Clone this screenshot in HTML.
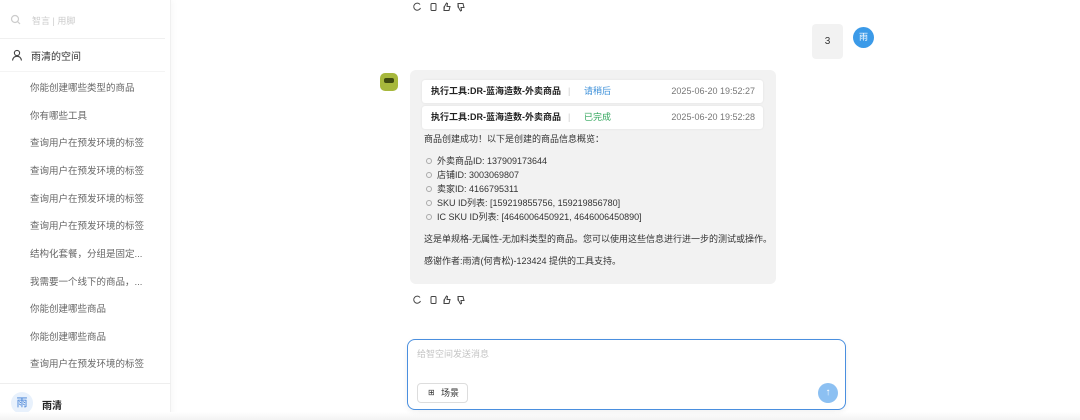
<!DOCTYPE html>
<html><head><meta charset="utf-8"><style>
*{margin:0;padding:0;box-sizing:border-box}
body{width:1080px;height:420px;overflow:hidden;background:#fff;font-family:"Liberation Sans","Noto Sans CJK SC",sans-serif;position:relative;color:#333}
.sb{position:absolute;left:0;top:0;width:171px;height:420px;background:#fff;border-right:1px solid #f0f0f0;box-shadow:2px 0 6px rgba(0,0,0,.03)}
.abs{position:absolute}
.item{position:absolute;left:30px;font-size:9.5px;color:#666;white-space:nowrap}
.card{position:absolute;left:422px;width:341px;height:23px;line-height:23px;background:#fff;border-radius:3px;font-size:9px;box-shadow:0 0 2px rgba(0,0,0,.08)}
.card span,.card b{position:absolute;top:0;line-height:23px}
.card b{left:9px;color:#222}
.card .s{left:146px;color:#ccc}
.card .st{left:162px}
.card .t{right:8px;color:#777}
.txt{position:absolute;left:424px;font-size:9px;color:#333;white-space:nowrap}
.li{position:absolute;left:426px;font-size:9px;color:#333;white-space:nowrap}
.li:before{content:"";position:absolute;left:0;top:4px;width:4px;height:4px;border:1px solid #aaa;border-radius:50%}
.li span{margin-left:11px}
svg{position:absolute}
</style></head><body>
<div class="sb">
<svg style="left:10px;top:14px" width="12" height="12" viewBox="0 0 12 12"><circle cx="5" cy="5" r="3.5" fill="none" stroke="#ccc" stroke-width="1.2"/><path d="M7.5 7.5L10 10" stroke="#ccc" stroke-width="1.2"/></svg>
<div class="abs" style="left:32px;top:14px;font-size:9px;color:#ccc">智言 | 用脚</div>
<div class="abs" style="left:0;top:38px;width:165px;height:1px;background:#f0f0f0"></div>
<svg style="left:11px;top:49px" width="12" height="12" viewBox="0 0 12 12"><circle cx="6" cy="4" r="2.6" fill="none" stroke="#444" stroke-width="1.1"/><path d="M1.5 11.5C2 8.5 4 7.3 6 7.3S10 8.5 10.5 11.5" fill="none" stroke="#444" stroke-width="1.1"/></svg>
<div class="abs" style="left:31px;top:48px;font-size:10px;color:#333">雨清的空间</div>
<div class="abs" style="left:0;top:71px;width:165px;height:1px;background:#f4f4f4"></div>
<div class="item" style="top:80px">你能创建哪些类型的商品</div>
<div class="item" style="top:108px">你有哪些工具</div>
<div class="item" style="top:135px">查询用户在预发环境的标签</div>
<div class="item" style="top:163px">查询用户在预发环境的标签</div>
<div class="item" style="top:191px">查询用户在预发环境的标签</div>
<div class="item" style="top:218px">查询用户在预发环境的标签</div>
<div class="item" style="top:246px">结构化套餐，分组是固定...</div>
<div class="item" style="top:274px">我需要一个线下的商品，...</div>
<div class="item" style="top:301px">你能创建哪些商品</div>
<div class="item" style="top:329px">你能创建哪些商品</div>
<div class="item" style="top:356px">查询用户在预发环境的标签</div>
<div class="abs" style="left:0;top:383px;width:171px;height:1px;background:#eee"></div>
<div class="abs" style="left:11px;top:392px;width:22px;height:22px;border-radius:50%;background:#e8f1fc;color:#3a7bd5;font-size:11px;text-align:center;line-height:22px">雨</div>
<div class="abs" style="left:42px;top:397px;font-size:10px;color:#222;font-weight:bold">雨清</div>
</div>

<svg style="left:412px;top:1px" width="62" height="12" viewBox="0 0 62 12"><g fill="none" stroke="#444" stroke-width="1"><path d="M8 3.5A3.5 3.5 0 1 0 8.5 7"/><rect x="19" y="2.5" width="5" height="7" rx="1"/><path d="M32 9.5h5l1-4h-3l.5-3-1-.5-2 3.5zM32 5.5v4"/><path d="M46 2.5h5l1 4h-3l.5 3-1 .5-2-3.5zM46 2.5v4"/></g></svg>

<div class="abs" style="left:812px;top:24px;width:31px;height:35px;background:#f2f2f2;border-radius:4px;font-size:10px;text-align:center;line-height:35px">3</div>
<div class="abs" style="left:853px;top:27px;width:21px;height:21px;border-radius:50%;background:#3b9ae8;color:#fff;font-size:9px;text-align:center;line-height:21px">雨</div>

<div class="abs" style="left:380px;top:73px;width:18px;height:18px;border-radius:5px;background:#a7b83c"></div>
<div class="abs" style="left:384px;top:78px;width:10px;height:5px;border-radius:2px;background:#3f4a10"></div>
<div class="abs" style="left:410px;top:70px;width:366px;height:214px;background:#f2f2f2;border-radius:6px"></div>
<div class="card" style="top:80px"><b>执行工具:DR-蓝海造数-外卖商品</b><span class="s">|</span><span class="st" style="color:#3b8fd9">请稍后</span><span class="t">2025-06-20 19:52:27</span></div>
<div class="card" style="top:106px"><b>执行工具:DR-蓝海造数-外卖商品</b><span class="s">|</span><span class="st" style="color:#2fa55a">已完成</span><span class="t">2025-06-20 19:52:28</span></div>
<div class="txt" style="top:132px">商品创建成功！以下是创建的商品信息概览：</div>
<div class="li" style="top:154px"><span>外卖商品ID: 137909173644</span></div>
<div class="li" style="top:168px"><span>店铺ID: 3003069807</span></div>
<div class="li" style="top:182px"><span>卖家ID: 4166795311</span></div>
<div class="li" style="top:196px"><span>SKU ID列表: [159219855756, 159219856780]</span></div>
<div class="li" style="top:210px"><span>IC SKU ID列表: [4646006450921, 4646006450890]</span></div>
<div class="txt" style="top:232px">这是单规格-无属性-无加料类型的商品。您可以使用这些信息进行进一步的测试或操作。</div>
<div class="txt" style="top:254px">感谢作者:雨清(何青松)-123424 提供的工具支持。</div>

<svg style="left:412px;top:294px" width="62" height="12" viewBox="0 0 62 12"><g fill="none" stroke="#444" stroke-width="1"><path d="M8 3.5A3.5 3.5 0 1 0 8.5 7"/><rect x="19" y="2.5" width="5" height="7" rx="1"/><path d="M32 9.5h5l1-4h-3l.5-3-1-.5-2 3.5zM32 5.5v4"/><path d="M46 2.5h5l1 4h-3l.5 3-1 .5-2-3.5zM46 2.5v4"/></g></svg>

<div class="abs" style="left:0;top:412px;width:1080px;height:8px;background:linear-gradient(#fff,#f3f3f3)"></div>
<div class="abs" style="left:407px;top:339px;width:439px;height:71px;border:1.5px solid #4a8fdf;border-radius:8px;background:#fff;box-shadow:0 2px 6px rgba(0,0,0,.06)"></div>
<div class="abs" style="left:417px;top:347px;font-size:9px;color:#c4c4c4">给智空间发送消息</div>
<div class="abs" style="left:417px;top:383px;width:51px;height:20px;border:1px solid #ddd;border-radius:4px;background:#fff;font-size:9px;line-height:18px;color:#333"><span style="position:absolute;left:10px;top:0;font-size:8px">&#x229E;</span><span style="position:absolute;left:23px">场景</span></div>
<div class="abs" style="left:818px;top:383px;width:20px;height:20px;border-radius:50%;background:#8cc0f2;color:#fff;font-size:10px;text-align:center;line-height:20px">↑</div>
</body></html>
